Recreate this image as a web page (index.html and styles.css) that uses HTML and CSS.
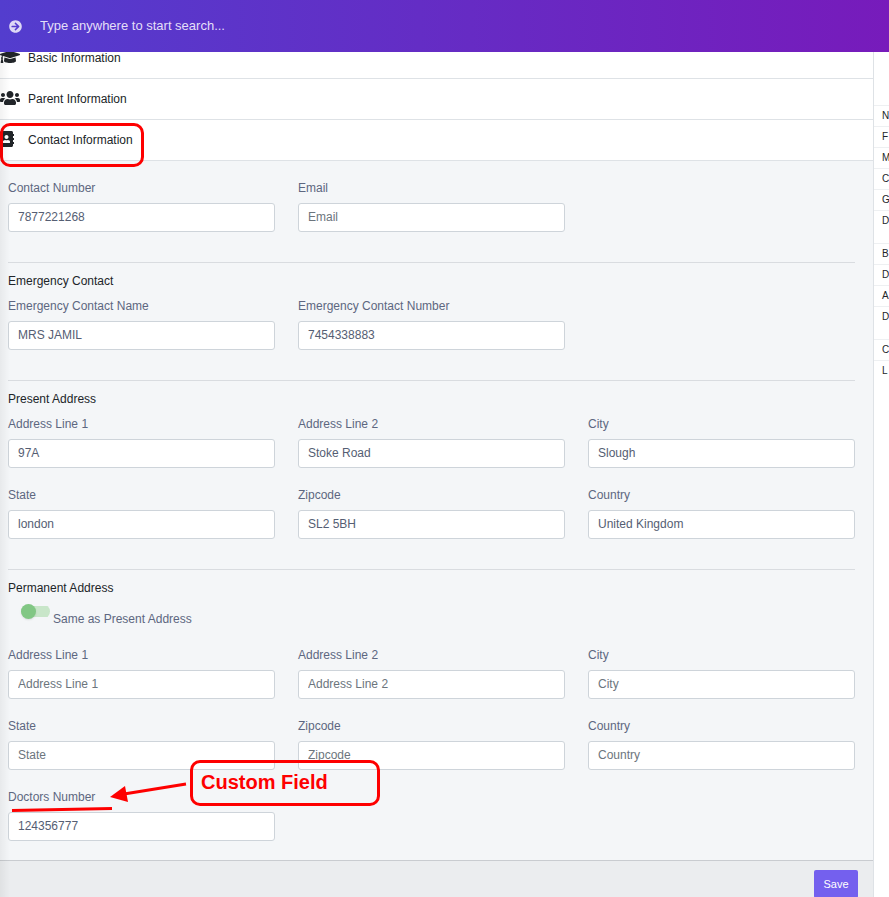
FILE: index.html
```html
<!DOCTYPE html>
<html lang="en">
<head>
<meta charset="utf-8">
<meta name="viewport" content="width=device-width, initial-scale=1">
<title>Contact Information</title>
<link rel="stylesheet" href="styles.css">
</head>
<body>
<header class="topbar">
  <svg class="topbar-icon" viewBox="0 0 512 512" aria-hidden="true"><path d="M256 8c137 0 248 111 248 248S393 504 256 504 8 393 8 256 119 8 256 8zm-28.9 143.6l75.5 72.4H120c-13.3 0-24 10.7-24 24v16c0 13.3 10.7 24 24 24h182.6l-75.5 72.4c-9.7 9.3-9.9 24.8-.4 34.3l11 10.9c9.4 9.4 24.6 9.4 33.9 0L404.3 273c9.4-9.4 9.4-24.6 0-33.9L271.6 106.3c-9.4-9.4-24.6-9.4-33.9 0l-11 10.9c-9.5 9.6-9.3 25.1.4 34.4z"/></svg>
  <input class="search" type="search" aria-label="Search" placeholder="Type anywhere to start search...">
</header>

<div class="layout">
  <main class="content">
    <nav class="accordion">
      <button class="accordion-row" type="button">
        <span class="accordion-icon"><svg width="20" height="16" viewBox="0 0 640 512" aria-hidden="true"><path d="M622.34 153.2L343.4 67.5c-15.2-4.67-31.6-4.67-46.79 0L17.66 153.2c-23.54 7.23-23.54 38.36 0 45.59l48.63 14.94c-10.67 13.19-17.23 29.28-17.88 46.9C38.78 266.15 32 276.11 32 288c0 10.78 5.68 19.85 13.86 25.65L20.33 428.53C18.11 438.52 25.71 448 35.94 448h56.11c10.24 0 17.84-9.48 15.62-19.47L82.14 313.65C90.32 307.85 96 298.78 96 288c0-11.57-6.47-21.25-15.66-26.87.76-15.02 8.44-28.3 20.69-36.72L296.6 284.5c9.06 2.78 26.44 6.25 46.79 0l278.95-85.7c23.55-7.24 23.55-38.36 0-45.6zM352.79 315.09c-28.53 8.76-52.84 3.92-65.59 0l-145.02-44.55L128 384c0 35.35 85.96 64 192 64s192-28.65 192-64l-14.18-113.47-145.03 44.56z"/></svg></span>
        Basic Information
      </button>
      <button class="accordion-row" type="button">
        <span class="accordion-icon"><svg width="20" height="16" viewBox="0 0 640 512" aria-hidden="true"><path d="M96 224c35.3 0 64-28.7 64-64s-28.7-64-64-64-64 28.7-64 64 28.7 64 64 64zm448 0c35.3 0 64-28.7 64-64s-28.7-64-64-64-64 28.7-64 64 28.7 64 64 64zm32 32h-64c-17.6 0-33.5 7.1-45.1 18.6 40.3 22.1 68.9 62 75.1 109.4h66c17.7 0 32-14.3 32-32v-32c0-35.3-28.7-64-64-64zm-256 0c61.9 0 112-50.1 112-112S381.9 32 320 32 208 82.1 208 144s50.1 112 112 112zm76.8 32h-8.3c-20.8 10-43.9 16-68.5 16s-47.6-6-68.5-16h-8.3C179.6 288 128 339.6 128 403.2V432c0 26.5 21.5 48 48 48h288c26.5 0 48-21.5 48-48v-28.8c0-63.6-51.6-115.2-115.2-115.2zm-223.7-13.4C161.5 263.1 145.6 256 128 256H64c-35.3 0-64 28.7-64 64v32c0 17.7 14.3 32 32 32h65.9c6.3-47.4 34.9-87.3 75.2-109.4z"/></svg></span>
        Parent Information
      </button>
      <button class="accordion-row" type="button" aria-expanded="true">
        <span class="accordion-icon"><svg width="14" height="16" viewBox="0 0 448 512" aria-hidden="true"><path d="M436 160c6.6 0 12-5.4 12-12v-40c0-6.6-5.4-12-12-12h-20V48c0-26.5-21.5-48-48-48H48C21.5 0 0 21.5 0 48v416c0 26.5 21.5 48 48 48h320c26.5 0 48-21.5 48-48v-48h20c6.6 0 12-5.4 12-12v-40c0-6.6-5.4-12-12-12h-20v-64h20c6.6 0 12-5.4 12-12v-40c0-6.6-5.4-12-12-12h-20v-64h20zm-228-32c35.3 0 64 28.7 64 64s-28.7 64-64 64-64-28.7-64-64 28.7-64 64-64zm112 236.8c0 10.6-10 19.2-22.4 19.2H118.4C106 384 96 375.4 96 364.8v-19.2c0-31.8 30.1-57.6 67.2-57.6h5c12.3 5.1 25.7 8 39.8 8s27.6-2.9 39.8-8h5c37.1 0 67.2 25.8 67.2 57.6v19.2z"/></svg></span>
        Contact Information
      </button>
    </nav>

    <form class="panel">
      <section class="section">
        <div class="fields">
          <div class="field"><label for="contact">Contact Number</label><input id="contact" type="text" value="7877221268"></div>
          <div class="field"><label for="email">Email</label><input id="email" type="email" placeholder="Email"></div>
        </div>
      </section>

      <section class="section">
        <h2>Emergency Contact</h2>
        <div class="fields">
          <div class="field"><label for="ec-name">Emergency Contact Name</label><input id="ec-name" type="text" value="MRS JAMIL"></div>
          <div class="field"><label for="ec-number">Emergency Contact Number</label><input id="ec-number" type="text" value="7454338883"></div>
        </div>
      </section>

      <section class="section">
        <h2>Present Address</h2>
        <div class="fields">
          <div class="field"><label for="pr-line1">Address Line 1</label><input id="pr-line1" type="text" value="97A"></div>
          <div class="field"><label for="pr-line2">Address Line 2</label><input id="pr-line2" type="text" value="Stoke Road"></div>
          <div class="field"><label for="pr-city">City</label><input id="pr-city" type="text" value="Slough"></div>
          <div class="field"><label for="pr-state">State</label><input id="pr-state" type="text" value="london"></div>
          <div class="field"><label for="pr-zip">Zipcode</label><input id="pr-zip" type="text" value="SL2 5BH"></div>
          <div class="field"><label for="pr-country">Country</label><input id="pr-country" type="text" value="United Kingdom"></div>
        </div>
      </section>

      <section class="section">
        <h2>Permanent Address</h2>
        <div class="toggle-row">
          <input class="toggle" id="same" type="checkbox" role="switch">
          <label for="same">Same as Present Address</label>
        </div>
        <div class="fields">
          <div class="field"><label for="pe-line1">Address Line 1</label><input id="pe-line1" type="text" placeholder="Address Line 1"></div>
          <div class="field"><label for="pe-line2">Address Line 2</label><input id="pe-line2" type="text" placeholder="Address Line 2"></div>
          <div class="field"><label for="pe-city">City</label><input id="pe-city" type="text" placeholder="City"></div>
          <div class="field"><label for="pe-state">State</label><input id="pe-state" type="text" placeholder="State"></div>
          <div class="field"><label for="pe-zip">Zipcode</label><input id="pe-zip" type="text" placeholder="Zipcode"></div>
          <div class="field"><label for="pe-country">Country</label><input id="pe-country" type="text" placeholder="Country"></div>
          <div class="field"><label for="doctor">Doctors Number</label><input id="doctor" type="text" value="124356777">
            <div class="callout">Custom Field</div>
            <svg class="callout-lines" width="190" height="40" viewBox="0 0 190 40" aria-hidden="true">
              <path d="M178 6L116 16M4 32.500L104 30.500" fill="none" stroke="#fe0000" stroke-width="3"/>
              <path d="M102 19L117 8L120 24z" fill="#fe0000"/>
            </svg>
          </div>
        </div>
      </section>
    </form>

    <footer class="actions"><button class="save" type="button">Save</button></footer>
    <div class="highlight"></div>
  </main>

  <aside class="summary">
    <ul>
      <li>N</li><li>F</li><li>M</li><li>C</li><li>G</li><li class="tall">D</li>
      <li>B</li><li>D</li><li>A</li><li class="tall">D</li><li>C</li><li>L</li>
    </ul>
  </aside>
</div>
</body>
</html>
```
FILE: styles.css
```css
* { box-sizing: border-box; }

body {
  margin: 0;
  height: 100vh;
  overflow: hidden;
  display: flex;
  flex-direction: column;
  background: #fff;
  color: #212529;
  font: 12px/18px "Liberation Sans", Arial, sans-serif;
}

input, button { font: inherit; }

.topbar {
  position: relative;
  z-index: 2;
  flex: none;
  height: 52px;
  display: flex;
  align-items: center;
  gap: 18px;
  padding: 0 9px;
  background: linear-gradient(to right, #533dce, #771bbb);
}

.topbar-icon { width: 13px; height: 13px; fill: #ddd8f5; }

.search {
  flex: 1;
  border: 0;
  padding: 0;
  background: none;
  color: #e4dff8;
  font-size: 13px;
  outline: 0;
}

.search::placeholder { color: #e4dff8; opacity: 1; }

.layout { flex: 1; min-height: 0; display: flex; }

.content {
  position: relative;
  flex: 1;
  min-width: 0;
  display: flex;
  flex-direction: column;
}

/* soft shade along the left edge */
.content::after {
  content: "";
  position: absolute;
  inset: 0 auto 0 0;
  width: 10px;
  background: linear-gradient(to right, rgba(0, 0, 0, .05), transparent);
  pointer-events: none;
}

.accordion { margin-top: -14px; }

.accordion-row {
  display: flex;
  align-items: center;
  gap: 8px;
  width: 100%;
  height: 41px;
  padding: 0;
  border: 0;
  border-bottom: 1px solid #dee2e6;
  background: #fff;
  color: #212529;
  text-align: left;
}

.accordion-icon { width: 20px; height: 18px; fill: #212529; }
.accordion-icon svg { display: block; }

.panel { padding: 18px 18px 19px 8px; background: #f4f6f8; }

.section + .section {
  margin-top: 30px;
  padding-top: 9px;
  border-top: 1px solid #d9dce0;
}

h2 { margin: 0 0 7px; font: inherit; }

.fields {
  display: grid;
  grid-template-columns: repeat(3, 1fr);
  gap: 18px 23px;
}

.field {
  position: relative;
  display: flex;
  flex-direction: column;
  gap: 6px;
  min-width: 0;
}

label { color: #5d6780; }

.field input {
  width: 100%;
  height: 29px;
  padding: 0 9px 1px;
  border: 1px solid #ced4da;
  border-radius: 3px;
  background: #fff;
  color: #555e73;
}

.field input::placeholder { color: #6c757d; opacity: 1; }

.toggle-row {
  display: flex;
  align-items: flex-start;
  gap: 3px;
  margin-bottom: 18px;
  padding-left: 13px;
}

.toggle-row label { margin-top: 6px; }

.toggle {
  appearance: none;
  display: flex;
  align-items: center;
  width: 29px;
  height: 15px;
  margin: 0;
  border-radius: 8px;
  background: linear-gradient(#c8e6c9, #c8e6c9) center / 100% 11px no-repeat;
}

.toggle::before {
  content: "";
  width: 15px;
  height: 15px;
  border-radius: 50%;
  background: #81c784;
  box-shadow: 0 1px 2px rgba(0, 0, 0, .1);
}

.actions {
  flex: 1;
  min-height: 0;
  display: flex;
  justify-content: flex-end;
  align-items: flex-start;
  padding: 9px 15px 0;
  border-top: 1px solid #c9ccd0;
  background: #ebedef;
}

.save {
  width: 44px;
  height: 28px;
  padding: 0;
  border: 0;
  border-radius: 2px;
  background: #7460ee;
  color: #fff;
  font-size: 11px;
}

.summary {
  flex: none;
  width: 16px;
  overflow: hidden;
  border-left: 1px solid #dee2e6;
  font-size: 10px;
  line-height: 20px;
}

.summary ul { margin: 53px 0 0; padding: 0; list-style: none; }
.summary li { height: 21px; padding-left: 8px; border-top: 1px solid #eef0f2; }
.summary .tall { height: 33px; }

/* annotations drawn over the form */
.highlight {
  position: absolute;
  top: 71px;
  left: 0;
  width: 144px;
  height: 44px;
  border: 3px solid #fe0000;
  border-radius: 10px;
}

.callout {
  position: absolute;
  top: -28px;
  left: 182px;
  width: 190px;
  height: 46px;
  padding: 0 8px;
  border: 3px solid #fe0000;
  border-radius: 10px;
  color: #fe0000;
  font-size: 20px;
  font-weight: bold;
  line-height: 38px;
  white-space: nowrap;
}

.callout-lines { position: absolute; top: -10px; left: 0; }
```
